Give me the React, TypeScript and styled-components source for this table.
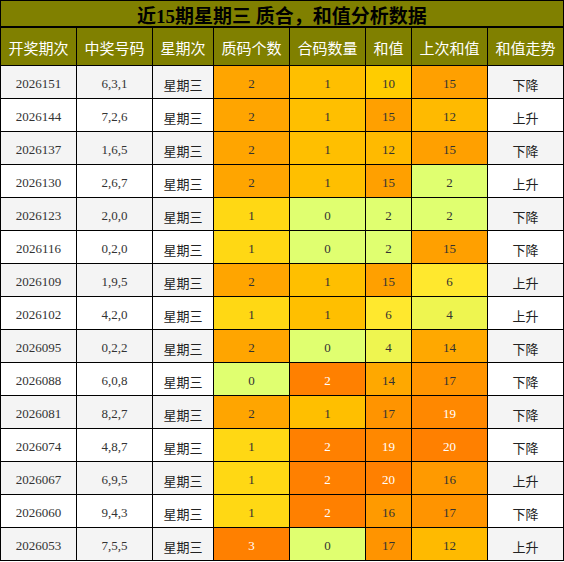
import React from 'react';
import styled, {createGlobalStyle} from 'styled-components';

const GlobalStyle = createGlobalStyle`
  html, body {
    margin: 0;
    padding: 0;
    background: #ffffff;
  }
`;

type Draw = {
    issue: string;
    balls: string;
    prime: number;
    composite: number;
    sum: number;
    lastSum: number;
    trend: string;
};

const draws: Draw[] = [
    {issue: '2026151', balls: '6,3,1', prime: 2, composite: 1, sum: 10, lastSum: 15, trend: '下降'},
    {issue: '2026144', balls: '7,2,6', prime: 2, composite: 1, sum: 15, lastSum: 12, trend: '上升'},
    {issue: '2026137', balls: '1,6,5', prime: 2, composite: 1, sum: 12, lastSum: 15, trend: '下降'},
    {issue: '2026130', balls: '2,6,7', prime: 2, composite: 1, sum: 15, lastSum: 2, trend: '上升'},
    {issue: '2026123', balls: '2,0,0', prime: 1, composite: 0, sum: 2, lastSum: 2, trend: '下降'},
    {issue: '2026116', balls: '0,2,0', prime: 1, composite: 0, sum: 2, lastSum: 15, trend: '下降'},
    {issue: '2026109', balls: '1,9,5', prime: 2, composite: 1, sum: 15, lastSum: 6, trend: '上升'},
    {issue: '2026102', balls: '4,2,0', prime: 1, composite: 1, sum: 6, lastSum: 4, trend: '上升'},
    {issue: '2026095', balls: '0,2,2', prime: 2, composite: 0, sum: 4, lastSum: 14, trend: '下降'},
    {issue: '2026088', balls: '6,0,8', prime: 0, composite: 2, sum: 14, lastSum: 17, trend: '下降'},
    {issue: '2026081', balls: '8,2,7', prime: 2, composite: 1, sum: 17, lastSum: 19, trend: '下降'},
    {issue: '2026074', balls: '4,8,7', prime: 1, composite: 2, sum: 19, lastSum: 20, trend: '下降'},
    {issue: '2026067', balls: '6,9,5', prime: 1, composite: 2, sum: 20, lastSum: 16, trend: '上升'},
    {issue: '2026060', balls: '9,4,3', prime: 1, composite: 2, sum: 16, lastSum: 17, trend: '下降'},
    {issue: '2026053', balls: '7,5,5', prime: 3, composite: 0, sum: 17, lastSum: 12, trend: '上升'},
];

const headers = ['开奖期次', '中奖号码', '星期次', '质码个数', '合码数量', '和值', '上次和值', '和值走势'];

// heat colours, picked off the screenshot
const primeColors: Record<number, string> = {0: '#e0ff70', 1: '#ffd814', 2: '#ffa500', 3: '#ff8000'};
const compositeColors: Record<number, string> = {0: '#e0ff70', 1: '#ffbf00', 2: '#ff8000'};
const sumColors: Record<number, string> = {
    2: '#e0ff70', 4: '#eef550', 6: '#ffe82e', 10: '#ffcc00', 12: '#ffba00',
    14: '#ffa800', 15: '#ffa000', 16: '#ff9a00', 17: '#ff9400', 19: '#ff8800', 20: '#ff8000',
};

const Page = styled.div`
  width: 564px;
`;

const Grid = styled.div`
  display: grid;
  grid-template-columns: 75px 75px 60px 75px 75px 45px 75px 75px;
  grid-template-rows: 26px 37px;
  grid-auto-rows: 32px;
  gap: 1px;
  padding: 1px;
  background: #000000;
`;

const Title = styled.div`
  grid-column: 1 / -1;
  margin-bottom: 1px;
  padding-top: 2px;
  display: flex;
  align-items: center;
  justify-content: center;
  background: #808000;
  color: #000000;
  font-family: "Liberation Serif", "Noto Sans CJK SC", serif;
  font-weight: bold;
  font-size: 19px;
`;

const HeadCell = styled.div`
  display: flex;
  align-items: center;
  justify-content: center;
  padding-top: 2px;
  background: #808000;
  color: #ffffff;
  font-family: "Noto Sans CJK SC", sans-serif;
  font-size: 15px;
`;

const Cell = styled.div<{ $bg: string; $light?: boolean; $cjk?: boolean }>`
  display: flex;
  align-items: center;
  justify-content: center;
  background: ${p => p.$bg};
  color: ${p => (p.$light ? '#ffffff' : p.$cjk ? '#222222' : '#333333')};
  font-family: ${p => (p.$cjk ? '"Noto Sans CJK SC", sans-serif' : '"Liberation Serif", serif')};
  font-size: 13px;
  padding-top: ${p => (p.$cjk ? '4px' : '3px')};
`;

const App = () => {
    return (
        <Page>
            <GlobalStyle/>
            <Grid>
                <Title>近15期星期三 质合，和值分析数据</Title>
                {headers.map(h => <HeadCell key={h}>{h}</HeadCell>)}
                {draws.map((d, i) => {
                    const rowBg = i % 2 === 0 ? '#f4f4f4' : '#ffffff';
                    return (
                        <React.Fragment key={d.issue}>
                            <Cell $bg={rowBg}>{d.issue}</Cell>
                            <Cell $bg={rowBg}>{d.balls}</Cell>
                            <Cell $bg={rowBg} $cjk>星期三</Cell>
                            <Cell $bg={primeColors[d.prime]} $light={d.prime >= 3}>{d.prime}</Cell>
                            <Cell $bg={compositeColors[d.composite]} $light={d.composite >= 2}>{d.composite}</Cell>
                            <Cell $bg={sumColors[d.sum]} $light={d.sum >= 19}>{d.sum}</Cell>
                            <Cell $bg={sumColors[d.lastSum]} $light={d.lastSum >= 19}>{d.lastSum}</Cell>
                            <Cell $bg={rowBg} $cjk>{d.trend}</Cell>
                        </React.Fragment>
                    );
                })}
            </Grid>
        </Page>
    );
};

export default App;
